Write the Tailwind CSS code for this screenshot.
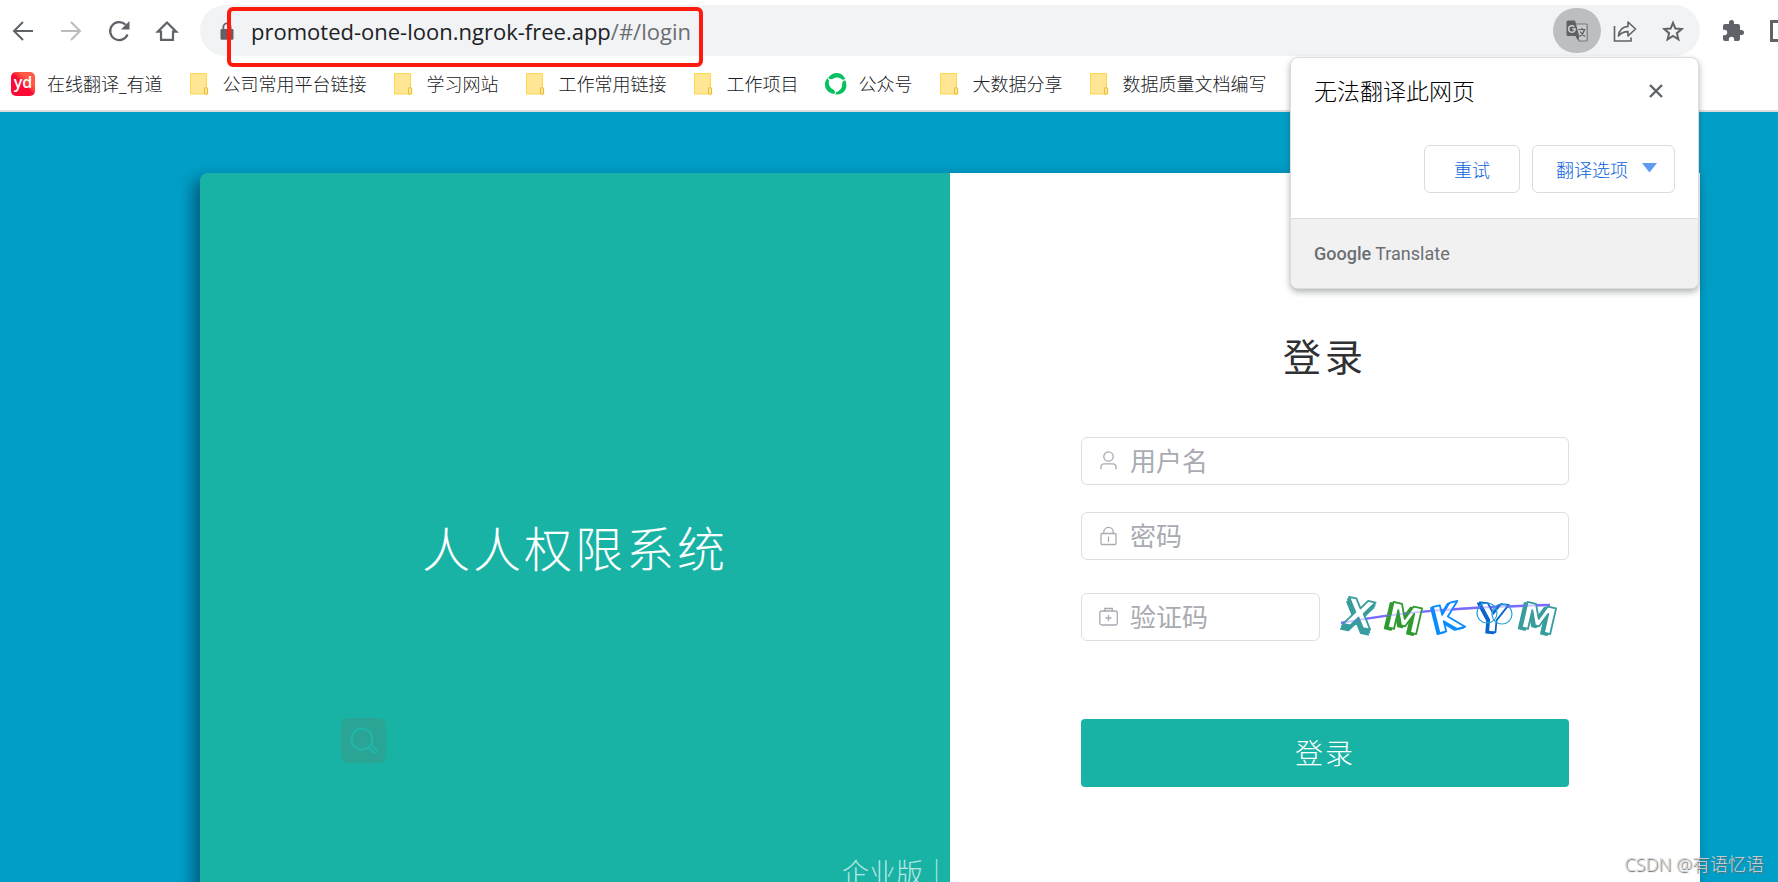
<!DOCTYPE html>
<html lang="zh-CN">
<head>
<meta charset="utf-8">
<meta name="viewport" content="width=device-width, initial-scale=1">
<title>登录</title>
<script src="https://cdn.jsdelivr.net/npm/@tailwindcss/browser@4"></script>
</head>
<body class="relative flex h-screen flex-col overflow-hidden bg-[#009fc7] font-['Noto_Sans','Noto_Sans_CJK_SC',sans-serif]">

<!-- Browser toolbar -->
<header class="shrink-0 border-b-2 border-[#dadce0] bg-white">
  <div class="flex items-center pt-[5px]">
    <nav class="-ml-px flex w-[201px] shrink-0 text-[#5f6368]" aria-label="浏览器">
      <button type="button" aria-label="后退" class="flex h-[51px] w-12 items-center justify-center">
        <svg class="size-6" viewBox="0 0 24 24" fill="none" stroke="currentColor" stroke-width="2"><path d="M22 12H3M12 3l-9 9 9 9"/></svg>
      </button>
      <button type="button" aria-label="前进" class="flex h-[51px] w-12 items-center justify-center text-[#bdbdbf]">
        <svg class="size-6" viewBox="0 0 24 24" fill="none" stroke="currentColor" stroke-width="2"><path d="M2 12h19M12 3l9 9-9 9"/></svg>
      </button>
      <button type="button" aria-label="刷新" class="flex h-[51px] w-12 items-center justify-center">
        <svg class="size-6" viewBox="0 0 24 24" fill="none" stroke="currentColor" stroke-width="2.2"><path d="M20.500 15.500A9 9 0 1 1 18.600 5.800"/><path d="M22.500 2v8.500H14z" fill="currentColor" stroke="none"/></svg>
      </button>
      <button type="button" aria-label="主页" class="flex h-[51px] w-12 items-center justify-center">
        <svg class="size-6" viewBox="0 0 24 24" fill="none" stroke="currentColor" stroke-width="2.200"><path d="M12 3.500L2.800 12.600H6v8.300h12v-8.300h3.200z"/></svg>
      </button>
    </nav>
    <div class="flex h-[51px] flex-1 items-center rounded-full bg-[#f1f3f4] pr-[3px] pl-5 text-[#5f6368]">
      <svg class="mr-[17px] h-[18px] w-[14px]" viewBox="0 0 14 18" fill="currentColor"><path d="M2.500 7V5a4.500 4.500 0 0 1 9 0v2h.7c.7 0 1.300.600 1.300 1.300v8.200c0 .700-.600 1.300-1.300 1.300H1.800C1.100 17.800.500 17.200.500 16.500V8.300C.500 7.600 1.100 7 1.800 7zM4.300 7h5.400V5a2.700 2.700 0 0 0-5.400 0z"/></svg>
      <p class="flex-1 font-['Open_Sans',sans-serif] text-[22px] leading-8 text-[#6b6e72]"><span class="text-[#202124]">promoted-one-loon.ngrok-free.app</span>/#/login</p>
      <button type="button" aria-label="翻译此页" class="flex h-[45px] w-12 items-center justify-center rounded-full bg-[#bdbec0]">
        <svg class="size-[22px]" viewBox="0 0 22 22"><path d="M9 4h11a1.200 1.200 0 0 1 1.200 1.200v14.600a1.200 1.200 0 0 1-1.200 1.200h-7z" fill="#c8c9cb" stroke="#77787b" stroke-width="1.200"/><path d="M2 .500h7l4.200 15.500H2A1.500 1.500 0 0 1 .500 14.500V2A1.500 1.500 0 0 1 2 .500z" fill="#5f6064"/><path d="M9.500 16h4.300l-2.300 4z" fill="#5f6064"/><path d="M8.300 6.700A3.300 3.300 0 1 0 9.200 9H6.300" fill="none" stroke="#d0d1d3" stroke-width="1.500"/><path d="M12.500 9.500h7M16 7.800v1.700M18.500 9.500c-.700 3-2.500 5.500-4.800 6.800M14.200 11.500c1 2 2.500 3.800 4.800 5" fill="none" stroke="#5f6064" stroke-width="1.200"/></svg>
      </button>
      <button type="button" aria-label="分享" class="flex h-[45px] w-12 items-center justify-center">
        <svg class="size-6" viewBox="0 0 24 24" fill="none" stroke="currentColor" stroke-width="1.600"><path d="M1.500 7v15h16.500v-3.500"/><path d="M5.500 17c.700-6 4-9.200 9.500-9.600V3l7.500 7-7.500 7v-4.400c-4.300 0-7.200 1.300-9.500 4.400z" stroke-linejoin="round"/></svg>
      </button>
      <button type="button" aria-label="收藏" class="flex h-[45px] w-12 items-center justify-center">
        <svg class="size-6" viewBox="0 0 24 24" fill="none" stroke="currentColor" stroke-width="2"><path d="M12 3.800l2.400 5.800 6.300.500-4.800 4.100 1.500 6.100L12 17l-5.400 3.300 1.500-6.100-4.800-4.100 6.300-.500z"/></svg>
      </button>
    </div>
    <div class="flex w-[78px] shrink-0 items-center overflow-hidden pl-[21px] text-[#5f6368]">
      <button type="button" aria-label="扩展程序" class="mr-[25px] shrink-0">
        <svg class="size-6" viewBox="0 0 24 24" fill="currentColor"><path d="M20.500 11H19V7a2 2 0 0 0-2-2h-4V3.500a2.500 2.500 0 0 0-5 0V5H4a2 2 0 0 0-2 2v3.800h1.500a2.700 2.700 0 0 1 0 5.400H2V20a2 2 0 0 0 2 2h3.800v-1.500a2.700 2.700 0 0 1 5.400 0V22H17a2 2 0 0 0 2-2v-4h1.500a2.500 2.500 0 0 0 0-5z"/></svg>
      </button>
      <button type="button" aria-label="侧边栏" class="h-[22px] w-6 shrink-0 border-[3px] border-current"></button>
    </div>
  </div>

  <!-- Bookmarks bar -->
  <nav class="flex h-[54px] items-center gap-[26px] overflow-hidden pt-0.5 pl-[11px] text-lg font-light whitespace-nowrap text-[#202124]" aria-label="书签">
    <a href="#" class="flex items-center gap-3"><span class="flex size-6 items-center justify-center rounded-[5px] bg-linear-to-bl from-[#ff5a45] from-30% to-[#fb0a35] to-50% pb-1 font-['Open_Sans',sans-serif] text-base leading-none font-semibold text-white">yd</span>在线翻译_有道</a>
    <a href="#" class="flex items-center gap-[14px]"><svg class="h-6 w-5" viewBox="0 0 20 24"><use href="#folder"/></svg>公司常用平台链接</a>
    <a href="#" class="flex items-center gap-[14px]"><svg class="h-6 w-5" viewBox="0 0 20 24"><use href="#folder"/></svg>学习网站</a>
    <a href="#" class="flex items-center gap-[14px]"><svg class="h-6 w-5" viewBox="0 0 20 24"><use href="#folder"/></svg>工作常用链接</a>
    <a href="#" class="flex items-center gap-[14px]"><svg class="h-6 w-5" viewBox="0 0 20 24"><use href="#folder"/></svg>工作项目</a>
    <a href="#" class="flex items-center gap-[11px]"><svg class="-ml-px size-6" viewBox="0 0 24 24" fill="#07c160"><path id="blade" d="M4.800 5.200C8.500-.3 17.500-.8 21 6.500c.6 1.400.7 2.600.5 4-.5 0-.9-.3-1.200-.8C17.500 5.500 12.500 3.800 8.200 7.200 6.500 8.300 3.900 7.200 4.800 5.200z"/><use href="#blade" transform="rotate(120 12 12)"/><use href="#blade" transform="rotate(240 12 12)"/><g stroke="#fff" stroke-width="1.200"><path d="M7.800 7.600C6 8.500 4 7.500 4 5.500" fill="none"/><path d="M7.800 7.600C6 8.500 4 7.500 4 5.500" fill="none" transform="rotate(120 12 12)"/><path d="M7.800 7.600C6 8.500 4 7.500 4 5.500" fill="none" transform="rotate(240 12 12)"/></g></svg>公众号</a>
    <a href="#" class="flex items-center gap-[14px]"><svg class="h-6 w-5" viewBox="0 0 20 24"><use href="#folder"/></svg>大数据分享</a>
    <a href="#" class="flex items-center gap-[14px]"><svg class="h-6 w-5" viewBox="0 0 20 24"><g id="folder"><path d="M1.500 1.500h16v14.500h1.200v6H1.500z" fill="#ffe694" stroke="#fbd84e"/><path d="M15.500 22v-5a1.500 1.500 0 0 1 3 0v5z" fill="#ffe694" stroke="#e8bf3c"/></g></svg>数据质量文档编写</a>
  </nav>
</header>

<!-- Login card -->
<main class="mt-[61px] mr-[78px] ml-[200px] flex flex-1 rounded-tl-lg shadow-[-6px_6px_16px_rgba(6,17,47,0.5)]">
  <section class="flex h-full w-1/2 flex-col overflow-hidden rounded-tl-lg bg-[#19b3a5] pt-[346px] text-white">
    <h1 class="text-center text-5xl leading-[60px] font-light tracking-[3px]">人人权限系统</h1>
    <p class="mt-[274px] shrink-0 text-right text-[27px] leading-10 font-light text-white/70">企业版｜</p>
  </section>
  <section class="h-full w-1/2 overflow-hidden bg-white pt-[158px] pr-[131px] pl-[131px]">
    <h2 class="text-center text-[38px] leading-[50px] font-normal tracking-[4px] text-[#303133]">登录</h2>
    <form class="mt-14 flex flex-col text-[#a8abb2]">
      <label class="flex h-12 items-center gap-[11px] rounded-md border border-[#dcdfe6] px-[17px]">
        <svg class="size-5 shrink-0" viewBox="0 0 20 20" fill="none" stroke="currentColor" stroke-width="1.300" stroke-linecap="round"><circle cx="9.500" cy="5.500" r="4.700"/><path d="M2 17.800v-2a3 3 0 0 1 3-3h9a3 3 0 0 1 3 3v2"/></svg>
        <input type="text" aria-label="用户名" placeholder="用户名" class="w-full min-w-0 bg-transparent text-[26px] leading-9 text-[#606266] outline-none placeholder:text-[#a8abb2]">
      </label>
      <label class="mt-[27px] flex h-12 items-center gap-[11px] rounded-md border border-[#dcdfe6] px-[17px]">
        <svg class="size-5 shrink-0" viewBox="0 0 20 20" fill="none" stroke="currentColor" stroke-width="1.300" stroke-linecap="round"><rect x="2" y="7.500" width="15" height="11" rx="1"/><path d="M4.800 7.500V6a4.700 4.700 0 0 1 9.400 0v1.500M9.500 11v4.500"/></svg>
        <input type="password" aria-label="密码" placeholder="密码" class="w-full min-w-0 bg-transparent text-[26px] leading-9 text-[#606266] outline-none placeholder:text-[#a8abb2]">
      </label>
      <div class="mt-[33px] flex items-center justify-between">
        <label class="flex h-12 w-[239px] items-center gap-[11px] rounded-md border border-[#dcdfe6] px-[17px]">
          <svg class="size-5 shrink-0" viewBox="0 0 20 20" fill="none" stroke="currentColor" stroke-width="1.300" stroke-linecap="round"><rect x=".8" y="4" width="17.500" height="14" rx="2"/><path d="M5.800 4V1.500h7.500V4M9.500 8.500v5M7 11h5"/></svg>
          <input type="text" aria-label="验证码" placeholder="验证码" class="w-full min-w-0 bg-transparent text-[26px] leading-9 text-[#606266] outline-none placeholder:text-[#a8abb2]">
        </label>
        <svg class="mr-[11px] h-12 w-[218px] overflow-visible" viewBox="0 0 218 48" role="img" aria-label="验证码图片" font-family="'DejaVu Sans', sans-serif" font-weight="700" text-anchor="middle" stroke-width="1.800" stroke-linejoin="round" fill="#fff">
          <path d="M1 30C60 19 120 14 210 12" fill="none" stroke="#7a6cff" stroke-width="2.500"/>
          <g class="drop-shadow-[-1px_3px_0_#379d9d]"><g class="drop-shadow-[-1px_2px_0_#379d9d]"><text x="19" y="34" font-size="38" transform="rotate(12 19 22)" stroke="#379d9d">X</text></g></g>
          <g class="drop-shadow-[-3px_1px_0_#2f9b2f]"><text x="65" y="38" font-size="36" transform="rotate(13 65 25)" stroke="#2f9b2f">M</text></g>
          <g class="drop-shadow-[-2px_1px_0_#0a8cff]"><text x="107" y="38" font-size="37" transform="rotate(-14 107 25)" stroke="#0a8cff">K</text></g>
          <g class="drop-shadow-[-2px_1px_0_#0a66cc]"><text x="153" y="39" font-size="39" transform="rotate(5 153 25)" stroke="#0a66cc">Y</text></g>
          <g class="drop-shadow-[-3px_1px_0_#379d9d]"><text x="199" y="38" font-size="36" transform="rotate(13 199 25)" stroke="#379d9d">M</text></g>
          <g fill="none" stroke="#28a0dc" stroke-width="1.200"><circle cx="147" cy="20" r="10"/><circle cx="162" cy="21" r="10"/></g>
          <path d="M1 30C60 19 120 14 210 12" fill="none" stroke="#7a6cff" stroke-width="2" stroke-opacity=".4"/>
        </svg>
      </div>
      <button type="submit" class="mt-[78px] h-[68px] rounded bg-[#19b3a5] text-[28px] leading-9 font-light tracking-[2px] text-white">登录</button>
    </form>
  </section>
</main>

<!-- Highlight around the address -->
<div class="absolute top-[7px] left-[227px] h-[60px] w-[476px] rounded-md border-4 border-[#ff1a10]"></div>

<!-- Floating image search -->
<button type="button" aria-label="搜图" class="absolute top-[718px] left-[341px] flex size-[45px] items-center justify-center rounded-lg bg-[#2aa595]">
  <svg class="size-7" viewBox="0 0 28 28" fill="none" stroke="#22b6a9" stroke-width="2"><circle cx="12" cy="12" r="10.500"/><path d="M18.500 20.500l2.800-2.800 5 5a2 2 0 0 1-2.800 2.800z"/></svg>
</button>

<!-- Translate bubble -->
<aside class="absolute top-[57px] right-[79px] w-[409px] overflow-hidden rounded-lg border border-[#dadce0] bg-white shadow-[0_3px_6px_rgba(60,64,67,0.4)]">
  <div class="flex items-center justify-between pt-[13px] pr-[30px] pl-[23px]">
    <h2 class="text-[23px] leading-10 font-light text-black">无法翻译此网页</h2>
    <button type="button" aria-label="关闭" class="flex size-6 items-center justify-center">
      <svg class="size-[14px]" viewBox="0 0 14 14" fill="none" stroke="#5f6368" stroke-width="2.400"><path d="M1 1l12 12M13 1L1 13"/></svg>
    </button>
  </div>
  <div class="flex justify-end gap-3 pt-[34px] pr-[23px] pb-[25px] text-lg font-light text-[#0b5fdc]">
    <button type="button" class="h-12 w-24 rounded-md border border-[#dadce0] pt-0.5">重试</button>
    <button type="button" class="flex h-12 w-[143px] items-center justify-end gap-[14px] rounded-md border border-[#dadce0] pt-0.5 pr-[17px]">翻译选项
      <svg class="mb-1 h-[10px] w-[15px]" viewBox="0 0 15 10" fill="#5e9bf0"><path d="M0 0h15L7.500 9.500z"/></svg>
    </button>
  </div>
  <p class="border-t border-[#dadce0] bg-[#f1f1f1] pt-[21px] pb-5 pl-[23px] font-['Roboto',sans-serif] text-lg leading-7 text-[#6b6f73]"><span class="font-medium">Google</span> Translate</p>
</aside>

<p class="absolute right-[14px] bottom-[6px] text-lg leading-6 font-light text-[#d5d8da] [text-shadow:1px_1px_1px_#666]">CSDN @有语忆语</p>
</body>
</html>
